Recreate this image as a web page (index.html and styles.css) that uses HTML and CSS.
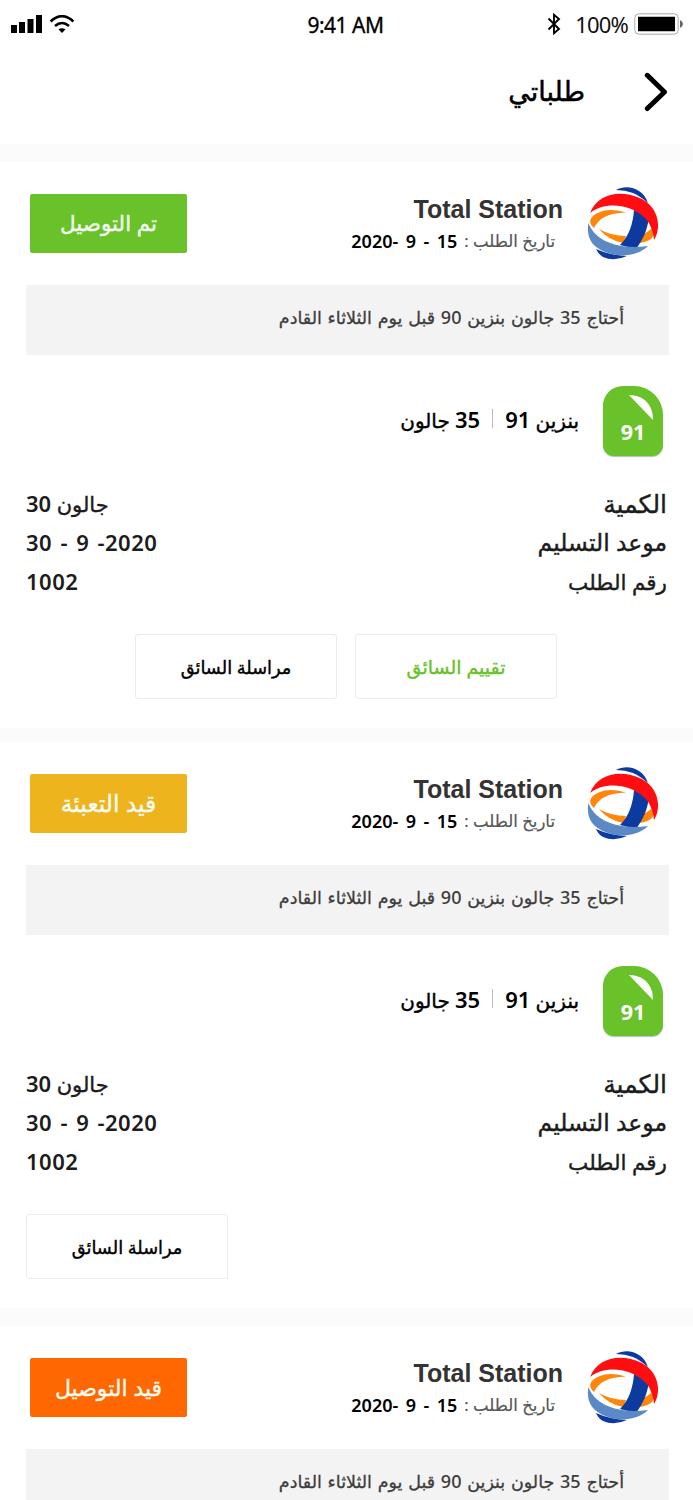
FILE: index.html
```html
<!DOCTYPE html>
<html lang="ar" dir="rtl">
<head>
<meta charset="utf-8">
<title>طلباتي</title>
<link rel="stylesheet" href="styles.css">
</head>
<body>
<svg class="defs" aria-hidden="true">
  <symbol id="logo" viewBox="0 0 71 73">
    <path fill="#0d3a9f" d="M29 3C40-3 56 1 61 16C55 11 51 8 46 6Q38 3 29 3Z"/>
    <path fill="#ff8609" d="M7 41C0 35 3 29 13 25Q22 21 39 25.500C21 26 12 31 7 41Z"/>
    <path fill="#ff8609" d="M12 42Q24 49 39 49L36 56Q21 53 12 42ZM53 49Q61 45 68 39Q68 48 64 52Q58 56 50 56Z"/>
    <path fill="#0d3a9f" d="M47 23L62 31C60 43 57 51 49 62L33 58C42 49 46 37 47 23Z"/>
    <path fill="#0d3a9f" d="M9 62Q22 68 40 69Q27 75 16 70Q11 67 9 62Z"/>
    <path fill="#ff0d10" d="M3 26C11 6 34 2 55 12C73 22 74 42 67 53C66 42 62 35 58 31C42 16 17 15 3 26Z"/>
    <path fill="#5a89c5" d="M1.500 36C8 54 31 63 61 59C49 71 24 72 8 59C1 53 0 43 1.500 36Z"/>
  </symbol>
</svg>

<header class="status-bar" dir="ltr">
  <svg class="signal" width="64" height="18" viewBox="0 0 64 18">
    <path d="M0 10h6v8H0zM8 7h6v11H8zM16.500 4h6v14h-6zM25 0h6v18h-6z"/>
    <g fill="none" stroke="#000" stroke-width="2.600"><path d="M39.600 6.500Q51-4 62.400 6.500M44 11Q51 5 58 11"/></g>
    <path d="M47.500 14.300Q51 12.200 54.500 14.300L51 18z"/>
  </svg>
  <span class="clock">9:41 AM</span>
  <div class="power">
    <svg width="14" height="22" viewBox="0 0 14 22"><path d="M1.500 5.500L12 16L7 20.200V1.800L12 6L1.500 16.500" fill="none" stroke="#000" stroke-width="1.900"/></svg>
    <span class="percent">100%</span>
    <svg width="49" height="22" viewBox="0 0 49 22"><rect x=".8" y=".8" width="43.400" height="20.400" rx="4" fill="#fff" stroke="#aaa"/><path d="M4 3.700h37v14.600H4z"/><path d="M46 7q3 1.500 3 4t-3 4z" fill="#666"/></svg>
  </div>
</header>
<nav class="topbar">
  <svg class="back" width="24" height="40" viewBox="0 0 24 40"><path d="M3.300 3.300L20.500 20L3.300 36.500" fill="none" stroke="#000" stroke-width="5" stroke-linecap="round" stroke-linejoin="round"/></svg>
  <h1 class="page-title">طلباتي</h1>
</nav>

<main class="orders">
  <article class="order">
    <div class="order-head">
      <svg class="logo"><use href="#logo"/></svg>
      <div class="station">
        <h2 class="name" dir="ltr">Total Station</h2>
        <p class="date"><span class="label">تاريخ الطلب :</span><b dir="ltr">2020- 9 - 15</b></p>
      </div>
      <span class="state delivered">تم التوصيل</span>
    </div>
    <p class="note">أحتاج <b>35</b> جالون بنزين <b>90</b> قبل يوم الثلاثاء القادم</p>
    <div class="fuel">
      <div class="badge"><svg width="26" height="26" viewBox="0 0 26 26"><path d="M0 0C14 0 24 9 24 25Z" fill="#fff"/></svg><span>91</span></div>
      <p class="fuel-text"><span>بنزين <b>91</b></span><i></i><span><b>35</b> جالون</span></p>
    </div>
    <dl class="details">
      <div class="quantity"><dt>الكمية</dt><dd dir="ltr"><b>30</b> جالون</dd></div>
      <div class="due"><dt>موعد التسليم</dt><dd dir="ltr"><b>30 - 9 -2020</b></dd></div>
      <div><dt>رقم الطلب</dt><dd dir="ltr"><b>1002</b></dd></div>
    </dl>
    <div class="actions centered">
      <button class="rate">تقييم السائق</button>
      <button>مراسلة السائق</button>
    </div>
  </article>

  <article class="order wide-gap">
    <div class="order-head">
      <svg class="logo"><use href="#logo"/></svg>
      <div class="station">
        <h2 class="name" dir="ltr">Total Station</h2>
        <p class="date"><span class="label">تاريخ الطلب :</span><b dir="ltr">2020- 9 - 15</b></p>
      </div>
      <span class="state filling">قيد التعبئة</span>
    </div>
    <p class="note">أحتاج <b>35</b> جالون بنزين <b>90</b> قبل يوم الثلاثاء القادم</p>
    <div class="fuel">
      <div class="badge"><svg width="26" height="26" viewBox="0 0 26 26"><path d="M0 0C14 0 24 9 24 25Z" fill="#fff"/></svg><span>91</span></div>
      <p class="fuel-text"><span>بنزين <b>91</b></span><i></i><span><b>35</b> جالون</span></p>
    </div>
    <dl class="details">
      <div class="quantity"><dt>الكمية</dt><dd dir="ltr"><b>30</b> جالون</dd></div>
      <div class="due"><dt>موعد التسليم</dt><dd dir="ltr"><b>30 - 9 -2020</b></dd></div>
      <div><dt>رقم الطلب</dt><dd dir="ltr"><b>1002</b></dd></div>
    </dl>
    <div class="actions">
      <button>مراسلة السائق</button>
    </div>
  </article>

  <article class="order last">
    <div class="order-head">
      <svg class="logo"><use href="#logo"/></svg>
      <div class="station">
        <h2 class="name" dir="ltr">Total Station</h2>
        <p class="date"><span class="label">تاريخ الطلب :</span><b dir="ltr">2020- 9 - 15</b></p>
      </div>
      <span class="state delivering">قيد التوصيل</span>
    </div>
    <p class="note">أحتاج <b>35</b> جالون بنزين <b>90</b> قبل يوم الثلاثاء القادم</p>
  </article>
</main>
</body>
</html>
```
FILE: styles.css
```css
* { box-sizing: border-box; margin: 0; padding: 0; }
html, body { height: 1500px; overflow: hidden; }
body {
  background: #fff;
  color: #1c1c1c;
  font-family: "Noto Sans", "DejaVu Sans", sans-serif;
  display: flex;
  flex-direction: column;
}
b { font-weight: 600; -webkit-text-stroke: 0; }
.defs { position: absolute; width: 0; height: 0; }

.status-bar {
  height: 50px;
  flex: none;
  display: grid;
  grid-template-columns: 1fr auto 1fr;
  align-items: center;
  padding: 0 10px 2px 11px;
}
.clock { font: 21px/26px "Noto Sans", sans-serif; color: #000; letter-spacing: -.5px; padding: 1px 3px 0 0; -webkit-text-stroke: .3px; }
.power { display: flex; align-items: center; justify-content: flex-end; }
.percent { font: 22px/26px "Noto Sans", sans-serif; letter-spacing: -.8px; margin: 0 6px 0 14px; color: #111; }

.topbar {
  height: 94px;
  flex: none;
  display: flex;
  align-items: flex-start;
  padding: 22px 25px 0 0;
}
.page-title { font-size: 27px; line-height: 38px; font-weight: 400; color: #000; margin-right: 59px; -webkit-text-stroke: .5px; }

.orders { border-top: 18px solid #fbfbfb; flex: none; }
.order { height: 580px; padding: 25px 24px 0 26px; border-bottom: 14px solid #fbfbfb; }
.order.wide-gap { height: 584px; border-bottom-width: 18px; }
.order.last { height: 174px; border-bottom: 0; overflow: hidden; }

.order-head { display: flex; align-items: flex-start; height: 98px; padding: 0 11px 0 4px; }
.logo { width: 71px; height: 73px; }
.station { margin: 7px 24px 0 auto; flex: 1; }
.name { font: bold 25px/30px "Liberation Sans", Arial, sans-serif; color: #333; text-align: right; }
.date { display: flex; align-items: center; padding-right: 8px; margin-top: 5px; line-height: 24px; color: #000; }
.date .label { font-size: 16.500px; color: #555; -webkit-text-stroke: .2px; }
.date b { font-size: 18px; margin-right: 7px; white-space: pre; word-spacing: 2.800px; }
.state {
  width: 157px;
  height: 59px;
  margin-top: 7px;
  border-radius: 2px;
  font-size: 21.500px;
  line-height: 58px;
  text-align: center;
  color: #f4fbef;
  -webkit-text-stroke: .4px;
}
.delivered { background: #69c22a; }
.filling { background: #edb41e; font-size: 23.500px; }
.delivering { background: #ff6700; font-size: 22px; }

.note {
  height: 70px;
  background: #f3f3f3;
  color: #3c3c3c;
  font-size: 17.500px;
  line-height: 64px;
  padding-right: 45px;
  word-spacing: 1.200px;
  white-space: nowrap;
  -webkit-text-stroke: .3px;
}
.note b { font-size: 18px; font-weight: 500; }

.fuel { display: flex; height: 119px; padding: 31px 6px 0 0; }
.badge {
  width: 60px;
  height: 70px;
  border-radius: 20px 29px 11px 11px;
  background: #69c22a;
  display: flex;
  flex-direction: column;
  align-items: center;
  color: #fff;
  font-size: 21.500px;
  font-weight: 700;
  line-height: 21px;
  padding-top: 9px;
  box-shadow: 0 1px 1px #bbb;
}
.badge svg { align-self: flex-start; margin-right: 8px; }
.fuel-text { display: flex; align-items: center; height: 65px; margin-right: 24px; font-size: 20px; color: #000; -webkit-text-stroke: .4px; }
.fuel-text b { font-size: 22px; }
.fuel-text i { width: 1px; height: 19px; background: #bbb; margin: 0 12px; }

.details { margin-top: 10px; }
.details div { display: flex; justify-content: space-between; align-items: center; height: 39px; padding-right: 2px; }
.details dt, .details dd { font-size: 21.500px; line-height: 39px; -webkit-text-stroke: .4px; }
.details dd { font-size: 21px; }
.details b { font-size: 22px; white-space: pre; letter-spacing: .5px; }
.quantity dt { font-size: 25px; }
.due dt { font-size: 23.500px; }
.due b { word-spacing: 2px; }

.actions { display: flex; justify-content: flex-end; gap: 18px; margin-top: 33px; }
.actions.centered { justify-content: center; padding-right: 3px; }
.actions button {
  width: 202px;
  height: 65px;
  border: 1px solid #ebebeb;
  border-radius: 3px;
  background: #fff;
  color: #000;
  font: 500 17.800px/64px "Noto Sans", "DejaVu Sans", sans-serif;
  -webkit-text-stroke: .4px;
}
.actions .rate { color: #69c22a; font-size: 19px; }
```
